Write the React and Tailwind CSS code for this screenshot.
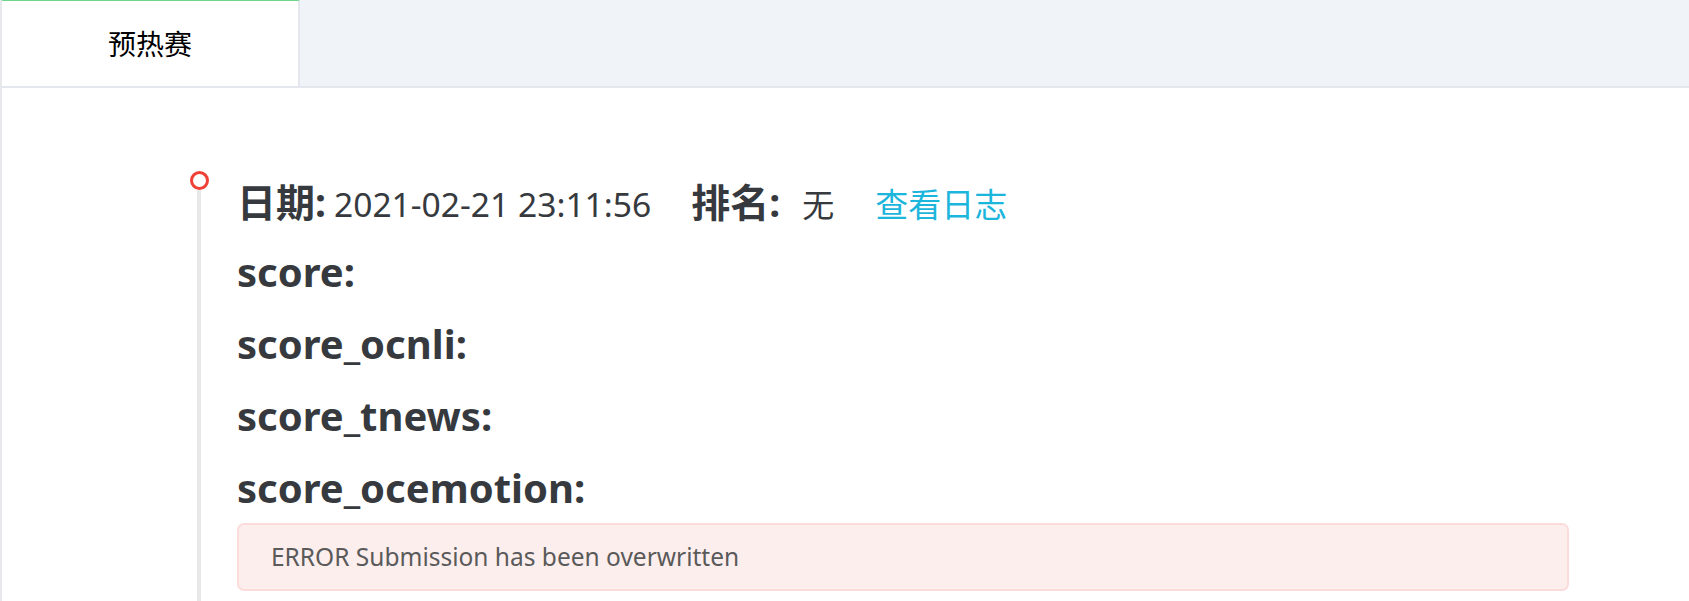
const rows = ['score:', 'score_ocnli:', 'score_tnews:', 'score_ocemotion:'];

const App = () => {
  return (
    <div className="h-[601px] w-full overflow-hidden bg-white border-l-2 border-[#e6e8eb] text-[#363a3e] font-['Noto_Sans','Noto_Sans_CJK_SC',sans-serif]">
      <div className="flex h-[88px] bg-[#f0f3f8] border-b-2 border-[#e4e7ed]">
        <div className="w-[298px] h-[86px] bg-white border-t border-t-[#6fd58a] border-r-2 border-r-[#e4e7ed] flex items-center justify-center text-[28px] text-black">
          预热赛
        </div>
      </div>

      <div className="pl-[186px] pr-[120px] pt-[76px]">
        <div className="relative pl-[49px]">
          <span className="absolute left-[2px] top-[7px] w-[19px] h-[19px] rounded-full border-[3px] border-[#ef4136] bg-white" />
          <span className="absolute left-[9px] top-[26px] w-[4px] h-[600px] bg-[#e8e8e8]" />

          <div className="flex items-baseline h-[72px] pt-[2px] leading-[72px] whitespace-nowrap">
            <span className="text-[39px] font-bold">日期:</span>
            <span className="text-[33.6px] ml-[8px]">2021-02-21 23:11:56</span>
            <span className="text-[39px] font-bold ml-[40px]">排名:</span>
            <span className="text-[32px] ml-[22px]">无</span>
            <a className="text-[33px] ml-[41px] text-[#1cb5dc] cursor-pointer">查看日志</a>
          </div>

          {rows.map((r) => (
            <div key={r} className="h-[72px] leading-[72px] text-[40px] font-bold whitespace-nowrap">
              {r}
            </div>
          ))}

          <div className="-mt-px h-[68px] flex items-center px-[32px] rounded-[7px] border-2 border-[#fcdcda] bg-[#fdeeee] text-[24.5px] text-[#5a5a5a]">
            ERROR Submission has been overwritten
          </div>
        </div>
      </div>
    </div>
  );
};

export default App;
